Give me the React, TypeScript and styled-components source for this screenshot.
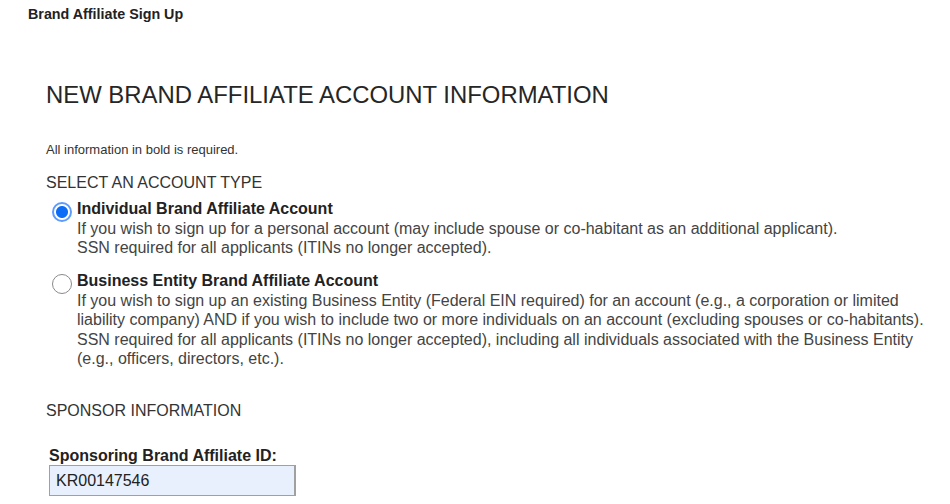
import styled, { createGlobalStyle } from 'styled-components';

const GlobalStyle = createGlobalStyle`
  body {
    margin: 0;
    background: #ffffff;
    font-family: 'Liberation Sans', Arial, sans-serif;
  }
`;

const accountTypes = [
  {
    id: 'individual',
    title: 'Individual Brand Affiliate Account',
    lines: [
      'If you wish to sign up for a personal account (may include spouse or co-habitant as an additional applicant).',
      'SSN required for all applicants (ITINs no longer accepted).',
    ],
  },
  {
    id: 'business',
    title: 'Business Entity Brand Affiliate Account',
    lines: [
      'If you wish to sign up an existing Business Entity (Federal EIN required) for an account (e.g., a corporation or limited liability company) AND if you wish to include two or more individuals on an account (excluding spouses or co-habitants).',
      'SSN required for all applicants (ITINs no longer accepted), including all individuals associated with the Business Entity (e.g., officers, directors, etc.).',
    ],
  },
];

export default function App() {
  return (
    <>
      <GlobalStyle />
      <StyledPage>
        <StyledTopTitle>Brand Affiliate Sign Up</StyledTopTitle>
        <StyledContent>
          <StyledHeading>NEW BRAND AFFILIATE ACCOUNT INFORMATION</StyledHeading>
          <StyledNotice>All information in bold is required.</StyledNotice>

          <StyledSectionLabel>SELECT AN ACCOUNT TYPE</StyledSectionLabel>
          <StyledOptionList>
            {accountTypes.map((type) => (
              <StyledOption key={type.id}>
                <StyledRadio
                  type='radio'
                  name='accountType'
                  value={type.id}
                  defaultChecked={type.id === 'individual'}
                />
                <StyledOptionText>
                  <StyledOptionTitle>{type.title}</StyledOptionTitle>
                  {type.lines.map((line) => (
                    <StyledOptionLine key={line}>{line}</StyledOptionLine>
                  ))}
                </StyledOptionText>
              </StyledOption>
            ))}
          </StyledOptionList>

          <StyledSectionLabel $spaced>SPONSOR INFORMATION</StyledSectionLabel>
          <StyledField>
            <StyledFieldLabel htmlFor='sponsorId'>
              Sponsoring Brand Affiliate ID:
            </StyledFieldLabel>
            <StyledInput id='sponsorId' name='sponsorId' defaultValue='KR00147546' />
          </StyledField>
        </StyledContent>
      </StyledPage>
    </>
  );
}

const StyledPage = styled.div`
  width: 950px;
  height: 504px;
  overflow: hidden;
`;

const StyledTopTitle = styled.div`
  padding: 6px 0 0 28px;
  font-size: 14.3px;
  line-height: 16px;
  font-weight: 700;
  color: #222;
`;

const StyledContent = styled.div`
  display: flex;
  flex-direction: column;
  padding: 0 16px 0 46px;
`;

const StyledHeading = styled.h1`
  margin: 59px 0 0;
  font-size: 23.9px;
  line-height: 28px;
  font-weight: 400;
  color: #262626;
`;

const StyledNotice = styled.p`
  margin: 34px 0 0;
  font-size: 13px;
  line-height: 14px;
  color: #333;
`;

const StyledSectionLabel = styled.div`
  margin-top: ${({ $spaced }) => ($spaced ? '32px' : '16px')};
  font-size: 16px;
  line-height: 19.5px;
  color: #333;
`;

const StyledOptionList = styled.div`
  display: flex;
  flex-direction: column;
  gap: 13.5px;
  margin-top: 6.5px;
`;

const StyledOption = styled.label`
  display: flex;
  align-items: flex-start;
  gap: 5px;
  padding-left: 6px;
`;

const StyledRadio = styled.input`
  appearance: none;
  flex: none;
  width: 20px;
  height: 20px;
  margin: 3px 0 0;
  border-radius: 50%;
  border: 1px solid #8a8a8a;
  background: #fff;

  &:checked {
    border: 2px solid #5d9bff;
    background: radial-gradient(circle, #0b6cf6 0 5.5px, #fff 6.5px);
  }
`;

const StyledOptionText = styled.div`
  display: flex;
  flex-direction: column;
  font-size: 16px;
  line-height: 19.5px;
  color: #444;
`;

const StyledOptionTitle = styled.span`
  font-weight: 700;
  color: #222;
`;

const StyledOptionLine = styled.span``;

const StyledField = styled.div`
  display: flex;
  flex-direction: column;
  margin: 29px 0 0 3px;
`;

const StyledFieldLabel = styled.label`
  font-size: 16px;
  line-height: 14px;
  font-weight: 700;
  color: #222;
`;

const StyledInput = styled.input`
  box-sizing: border-box;
  width: 247px;
  height: 31px;
  margin: 2px 0 0;
  padding: 0 6px;
  border: 1px solid #a0a0a0;
  border-right-width: 2px;
  background: #e8f0fe;
  font-family: 'Liberation Sans', Arial, sans-serif;
  font-size: 16px;
  color: #222;
  outline: none;
`;
